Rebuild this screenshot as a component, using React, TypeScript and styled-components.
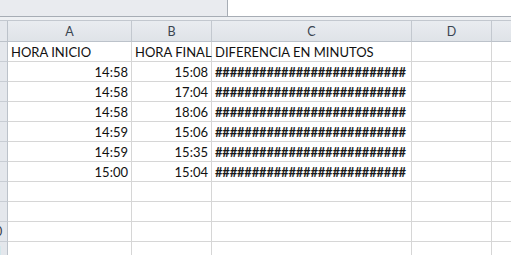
import React from 'react';
import styled, { createGlobalStyle } from 'styled-components';

const GlobalStyle = createGlobalStyle`
  html, body {
    margin: 0;
    padding: 0;
    background: #ffffff;
    overflow: hidden;
  }
  body {
    font-family: Lato, "Liberation Sans", sans-serif;
  }
`;

const Window = styled.div`
  width: 511px;
  height: 255px;
  overflow: hidden;
  display: flex;
  flex-direction: column;
  & > * {
    flex-shrink: 0;
  }
`;

const FormulaBar = styled.div`
  display: flex;
  height: 17px;
  box-sizing: border-box;
  border-bottom: 1px solid #a7adb5;
`;

const NameArea = styled.div`
  width: 227px;
  background: #e9ebef;
  border-right: 1px solid #a7adb5;
`;

const FormulaInput = styled.div`
  flex: 1;
  background: #ffffff;
`;

const Spacer = styled.div`
  height: 3px;
  background: #eef0f3;
  border-bottom: 1px solid #c3c8cf;
`;

const Grid = styled.div`
  display: grid;
  grid-template-columns: 25px 124px 80px 200px 80px 80px;
  grid-template-rows: 21px;
  grid-auto-rows: 20px;
  margin-left: -17px;
`;

const Corner = styled.div`
  box-sizing: border-box;
  background: #e4e7ec;
  border-right: 1px solid #bcc2ca;
  border-bottom: 1px solid #bcc2ca;
`;

const ColHead = styled.div`
  box-sizing: border-box;
  display: flex;
  align-items: center;
  justify-content: center;
  background: linear-gradient(#e9ecf0, #dfe3e8);
  border-right: 1px solid #c3c8cf;
  border-bottom: 1px solid #bcc2ca;
  color: #3a4450;
  font-size: 12.5px;
`;

const RowHead = styled.div`
  box-sizing: border-box;
  display: flex;
  align-items: center;
  justify-content: center;
  background: #e4e7ec;
  border-right: 1px solid #bcc2ca;
  border-bottom: 1px solid #c8cdd4;
  color: #333d4a;
  font-size: 12.5px;
`;

const Cell = styled.div<{ $align?: 'left' | 'right' }>`
  box-sizing: border-box;
  display: flex;
  align-items: flex-end;
  justify-content: ${p => (p.$align === 'right' ? 'flex-end' : 'flex-start')};
  padding: 0 3px 1px 3px;
  border-right: 1px solid #d6d6d6;
  border-bottom: 1px solid #d6d6d6;
  color: #111111;
  font-size: 13px;
  white-space: nowrap;
`;

const Hashes = styled.span`
  font-size: 13px;
  letter-spacing: -0.2px;
  font-weight: 700;
  color: #1a1a1a;
`;

const columns = ['A', 'B', 'C', 'D', 'E'];

const rows: [string, string][] = [
  ['14:58', '15:08'],
  ['14:58', '17:04'],
  ['14:58', '18:06'],
  ['14:59', '15:06'],
  ['14:59', '15:35'],
  ['15:00', '15:04'],
];

const hashText = '#'.repeat(26);

const App = () => {
  const total = 11;
  return (
    <Window>
      <GlobalStyle />
      <FormulaBar>
        <NameArea />
        <FormulaInput />
      </FormulaBar>
      <Spacer />
      <Grid>
        <Corner />
        {columns.map(c => (
          <ColHead key={c}>{c}</ColHead>
        ))}

        <RowHead>1</RowHead>
        <Cell>HORA INICIO</Cell>
        <Cell>HORA FINAL</Cell>
        <Cell>DIFERENCIA EN MINUTOS</Cell>
        <Cell />
        <Cell />

        {rows.map(([start, end], i) => (
          <React.Fragment key={i}>
            <RowHead>{i + 2}</RowHead>
            <Cell $align="right">{start}</Cell>
            <Cell $align="right">{end}</Cell>
            <Cell>
              <Hashes>{hashText}</Hashes>
            </Cell>
            <Cell />
            <Cell />
          </React.Fragment>
        ))}

        {Array.from({ length: total - rows.length - 1 }, (_, k) => (
          <React.Fragment key={`e${k}`}>
            <RowHead>{rows.length + 2 + k}</RowHead>
            <Cell />
            <Cell />
            <Cell />
            <Cell />
            <Cell />
          </React.Fragment>
        ))}
      </Grid>
    </Window>
  );
};

export default App;
